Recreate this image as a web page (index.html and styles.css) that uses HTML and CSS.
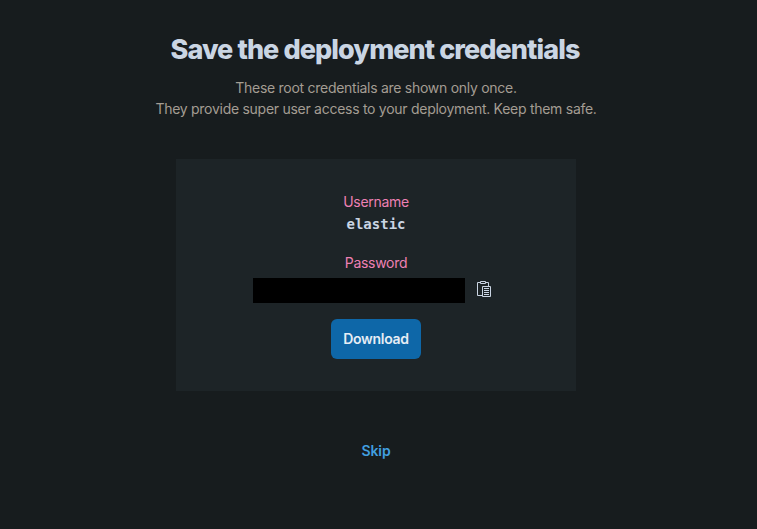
FILE: index.html
```html
<!DOCTYPE html>
<html lang="en">
<head>
<meta charset="utf-8">
<title>Deployment credentials</title>
<link rel="stylesheet" href="styles.css">
</head>
<body>
<main class="page">
  <h1 class="title">Save the deployment credentials</h1>
  <p class="intro"><span class="line">These root credentials are shown only once.</span><span class="line">They provide super user access to your deployment. Keep them safe.</span></p>
  <section class="panel">
    <div class="label">Username</div>
    <div class="username">elastic</div>
    <div class="label">Password</div>
    <div class="password-row">
      <div class="password"></div>
      <svg class="copy" viewBox="0 0 16 16" width="16" height="16" fill="none" stroke="currentColor">
        <path d="M6 14.500H1.500v-13h3M9.500 1.500h3V5M4.500 .5h5v2h-5zM6.500 5.500h8v10h-8zM8 7.500h5M8 9.500h5M8 11.500h5M8 13.500h5"/>
      </svg>
    </div>
    <button class="download">Download</button>
  </section>
  <a class="skip" href="#">Skip</a>
</main>
</body>
</html>
```
FILE: styles.css
```css
* { box-sizing: border-box; }
body {
  margin: 0;
  background: #171c1e;
  font-family: Inter, sans-serif;
  font-size: 14px;
  line-height: 21px;
}
.page {
  display: flex;
  flex-direction: column;
  align-items: center;
  width: 752px;
  height: 529px;
  padding-top: 33px;
}
.title {
  margin: 0 2px 0 0;
  color: #cad5e3;
  font-size: 27px;
  font-weight: 800;
  line-height: 34px;
  letter-spacing: -0.92px;
  white-space: nowrap;
}
.intro {
  margin: 10px 0 40px;
  color: #a49d93;
  letter-spacing: -0.275px;
  text-align: center;
}
.line { display: block; white-space: nowrap; }
.panel {
  display: flex;
  flex-direction: column;
  align-items: center;
  width: 400px;
  height: 232px;
  padding-top: 32px;
  background: #1d2427;
}
.label { color: #ee80b4; letter-spacing: -0.3px; }
.username {
  margin: 2px 0 17px;
  color: #cad5e3;
  font: 700 14px/21px "DejaVu Sans Mono", monospace;
}
.password-row {
  display: flex;
  align-items: flex-start;
  gap: 11px;
  margin: 5px 0 16px;
  padding-right: 7px;
}
.password { width: 212px; height: 25px; background: #000; }
.copy { margin-top: 3px; color: #cad5e3; }
.download {
  width: 90px;
  height: 40px;
  padding: 0 0 2px;
  border: 0;
  border-radius: 6px;
  background: #0e67a8;
  color: #e6edf5;
  font: 600 14px/21px Inter, sans-serif;
  letter-spacing: -0.3px;
}
.skip {
  margin-top: 49px;
  color: #419fe0;
  font-weight: 600;
  letter-spacing: -0.1px;
  text-decoration: none;
}
```
